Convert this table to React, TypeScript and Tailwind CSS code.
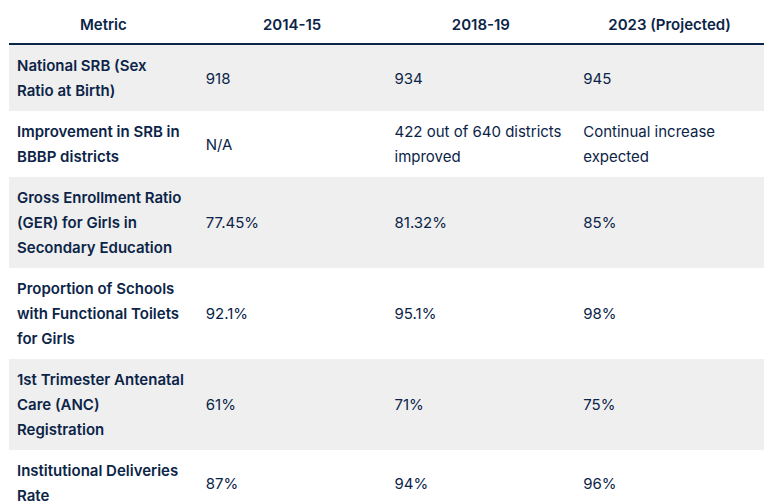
const rows = [
  ["National SRB (Sex\nRatio at Birth)", "918", "934", "945"],
  ["Improvement in SRB in BBBP districts", "N/A", "422 out of 640 districts improved", "Continual increase expected"],
  ["Gross Enrollment Ratio (GER) for Girls in Secondary Education", "77.45%", "81.32%", "85%"],
  ["Proportion of Schools with Functional Toilets for Girls", "92.1%", "95.1%", "98%"],
  ["1st Trimester Antenatal Care (ANC) Registration", "61%", "71%", "75%"],
  ["Institutional Deliveries Rate", "87%", "94%", "96%"],
];

export default function App() {
  return (
    <div className="bg-white px-[9px] text-[#0b2447] font-['Inter','Liberation_Sans',sans-serif] text-[15px] leading-[25px]">
      <table className="w-[755px] table-fixed border-collapse">
        <thead>
          <tr className="border-b-2 border-[#0b2447]">
            {["Metric", "2014-15", "2018-19", "2023 (Projected)"].map((h) => (
              <th key={h} className="h-[44px] px-2 pt-[5px] text-center font-semibold">
                {h}
              </th>
            ))}
          </tr>
        </thead>
        <tbody>
          {rows.map((r, i) => (
            <tr key={i} className={i % 2 === 0 ? "bg-[#efefef]" : "bg-white"}>
              <td className="whitespace-pre-line px-2 py-2 align-middle font-semibold">{r[0]}</td>
              <td className="px-2 py-2 align-middle">{r[1]}</td>
              <td className="px-2 py-2 align-middle">{r[2]}</td>
              <td className="px-2 py-2 align-middle">{r[3]}</td>
            </tr>
          ))}
        </tbody>
      </table>
    </div>
  );
}
